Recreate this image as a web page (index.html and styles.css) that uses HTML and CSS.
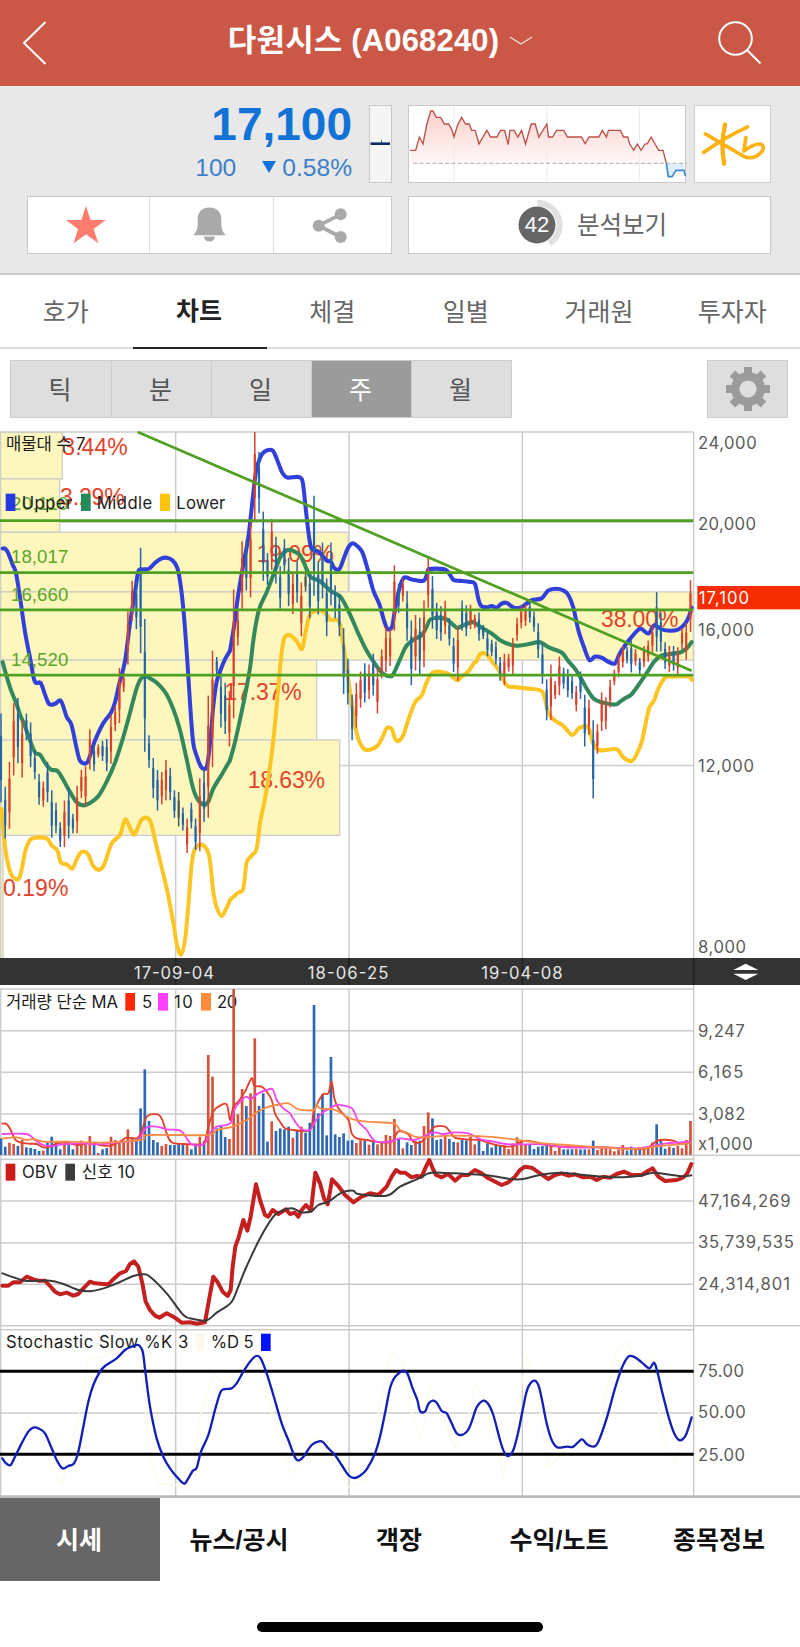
FILE: index.html
```html
<!DOCTYPE html>
<html lang="ko">
<head>
<meta charset="utf-8">
<title>다원시스 (A068240)</title>
<link rel="stylesheet" href="styles.css">
</head>
<body>
<header class="topbar">
  <svg class="back" viewBox="0 0 24 44"><path d="M22.5 1 1 22 22.5 43"/></svg>
  <h1 class="title">다원시스 (A068240)<svg class="chev" viewBox="0 0 24 10"><path d="M1 1 12 8 23 1"/></svg></h1>
  <svg class="search" viewBox="0 0 44 44"><circle cx="17.5" cy="17.5" r="16.3"/><path d="M29 29 42.500 42.500"/></svg>
</header>

<section class="quote">
  <div class="left">
    <div class="row">
      <div class="price">
        <div class="now">17,100</div>
        <div class="diff"><span>100</span><i class="down"></i><span>0.58%</span></div>
      </div>
      <div class="mini"><svg viewBox="0 0 23 78"><path d="M12.500 35v4" stroke="#2d6fc4"/><path d="M1.500 38.700h19.500" stroke="#0d2c66" stroke-width="2.600"/></svg></div>
    </div>
    <div class="buttons">
      <div class="btn"><svg width="40" height="38" viewBox="0 0 120 114"><path fill="#ff7d6e" d="M60 0 74 42 119 42 83 69 97 112 60 85 23 112 36 69 0 42 46 42Z"/></svg></div>
      <div class="btn bell"><svg width="33" height="35" viewBox="0 0 99 104"><path fill="#a9a9a9" d="M1 84Q12 74 14 56V36C14 14 28 1 49 1S85 14 85 36V56Q87 74 98 84ZM32 88H66Q63 103 49 103T32 88Z"/></svg></div>
      <div class="btn share"><svg width="35" height="35" viewBox="0 0 105 105"><g fill="#a9a9a9" stroke="none"><path d="M86 19 20 53 86 87" fill="none" stroke="#a9a9a9" stroke-width="11"/><circle cx="86" cy="19" r="18"/><circle cx="20" cy="53" r="18"/><circle cx="86" cy="87" r="18"/></g></svg></div>
    </div>
  </div>
  <div class="right">
    <div class="row">
      <div class="spark">
        <svg viewBox="27 318 829 228">
          <defs>
            <linearGradient id="warm" x1="0" y1="0" x2="0" y2="1"><stop offset="0" stop-color="#fbd0cc"/><stop offset="1" stop-color="#fff8f7"/></linearGradient>
          </defs>
          <path fill="url(#warm)" d="M30 451H47L58 411 69 432 80 375 92 333H99L109 352H122L133 372H146L155 388 162 411 173 375 185 352 197 372H208L215 391H226L237 432 261 391 272 411H291L302 391H314L325 434 330 391H343L354 411 365 391 377 432 394 372H406L417 411 441 372 446 411H458L470 391H492L503 411H545L556 431 568 411H597L608 391 620 411 626 391H662L672 411H684L690 432 702 451 713 432 724 451 736 432 743 431 754 411 777 451H790L800 490H30Z"/>
          <path stroke="#ececec" stroke-width="3" d="M162 318V546M441 318V546M719 318V546"/>
          <path fill="#dff0fc" d="M800 490 806 530H817L829 511H853V490Z"/>
          <path stroke="#aaa" stroke-width="3" stroke-dasharray="12 7" d="M40 490H862"/>
          <path fill="none" stroke="#bb5148" stroke-width="4" d="M30 451H47L58 411 69 432 80 375 92 333H99L109 352H122L133 372H146L155 388 162 411 173 375 185 352 197 372H208L215 391H226L237 432 261 391 272 411H291L302 391H314L325 434 330 391H343L354 411 365 391 377 432 394 372H406L417 411 441 372 446 411H458L470 391H492L503 411H545L556 431 568 411H597L608 391 620 411 626 391H662L672 411H684L690 432 702 451 713 432 724 451 736 432 743 431 754 411 777 451H790L800 490"/>
          <path fill="none" stroke="#3d86ca" stroke-width="5" d="M800 490 806 530H817L829 511H853L857 528"/>
        </svg>
      </div>
      <div class="brand">
        <svg viewBox="886 319 224 226"><g fill="none" stroke="#fcb215" stroke-width="11" stroke-linecap="round" stroke-linejoin="round"><path stroke-width="13" d="M976 374Q962 430 973 491"/><path d="M917 402 965 430 1034 470Q1052 477 1070 468C1094 454 1096 433 1078 432Q1060 432 1032 453L1038 413M1043 381Q975 413 912 457"/></g></svg>
      </div>
    </div>
    <div class="analysis">
      <span class="score"><svg viewBox="0 0 50 50"><path d="M22 3A22 22 0 0 1 34.500 43.500" fill="none" stroke="#e0e0e0" stroke-width="6"/><circle cx="22" cy="25" r="18.500" fill="#666"/></svg><b>42</b></span>
      <span class="view">분석보기</span>
    </div>
  </div>
</section>

<nav class="tabs">
  <a>호가</a><a class="on">차트</a><a>체결</a><a>일별</a><a>거래원</a><a>투자자</a>
</nav>

<div class="tools">
  <div class="periods"><a>틱</a><a>분</a><a>일</a><a class="on">주</a><a>월</a></div>
  <div class="gear">
    <svg viewBox="-22 -22 44 44"><g fill="#9b9b9b"><rect x="-4" y="-22" width="8" height="44"/><rect x="-4" y="-22" width="8" height="44" transform="rotate(45)"/><rect x="-4" y="-22" width="8" height="44" transform="rotate(90)"/><rect x="-4" y="-22" width="8" height="44" transform="rotate(135)"/><circle r="17"/></g><circle r="8.600" fill="#dedede"/></svg>
  </div>
</div>

<svg class="chart price-chart" viewBox="0 0 2400 1614">
  <g transform="scale(1 1.0332)">
    <path class="grid" d="M0 35H2081M0 297H2081M0 1003H2081M2 35V1562M527 35V1562M1047 35V1562M1567 35V1562M2081 35V1562"/>
    <g fill="#fdf7be" stroke="#cfcfc8" stroke-width="4">
      <rect x="2" y="36" width="185" height="135"/><rect x="2" y="171" width="177" height="155"/>
      <rect x="2" y="326" width="1043" height="173"/><rect x="2" y="499" width="2078" height="198"/>
      <rect x="2" y="697" width="948" height="232"/><rect x="2" y="929" width="1017" height="277"/><rect x="2" y="1206" width="7" height="356"/>
    </g>
  </g>
  <g class="pct">
    <text x="187" y="106" textLength="196">3.44%</text><text x="180" y="256" textLength="194">3.29%</text>
    <text x="770" y="427" textLength="232">19.09%</text><text x="673" y="839" textLength="232">17.37%</text>
    <text x="743" y="1103" textLength="232">18.63%</text><text x="1803" y="620" textLength="232">38.00%</text>
    <text x="9" y="1427" textLength="196">0.19%</text>
  </g>
  <g transform="scale(1 1.0332)">
    <g class="lower smooth">
      <polyline points="5,1130 10,1190 20,1270 35,1322 55,1333 65,1305 75,1255 88,1222 105,1213 140,1215 155,1235 172,1250 183,1285 200,1290 217,1303 228,1280 240,1258 252,1253 265,1262 280,1295 298,1306 313,1290 335,1230 360,1205 375,1160 388,1180 402,1204 415,1180 425,1160 440,1155 453,1170 470,1240 500,1360 520,1460 530,1520 543,1552 555,1510 565,1410 575,1290 585,1245 605,1233 622,1250 630,1280 640,1370 650,1415 665,1440 678,1420 690,1395"/>
      <polyline transform="translate(690 0)" points="0,1393 25,1372 40,1360 50,1285 65,1265 80,1245 90,1170 105,1100 118,1020 130,930 140,830 150,720 157,660 165,630 180,625 200,642 216,665 226,620 240,565 270,553 290,565 300,580 325,582 335,620 350,720 365,820 378,900 390,938 408,958 440,948 458,920 470,895 485,897 495,925 505,932 520,915 535,870 555,820 575,800 590,762 610,733 650,735 680,755 690,750"/>
      <polyline transform="translate(1380 0)" points="0,748 25,730 40,708 50,700 60,680 80,680 95,700 115,725 140,770 160,775 205,780 240,785 252,800 265,850 285,873 310,888 335,914 350,903 360,893 385,893 400,940 420,959 470,956 490,980 515,990 530,970 545,935 555,890 568,835 582,815 595,780 615,748 635,745 685,745 695,755"/>
    </g>
    <g class="upper smooth">
      <polyline points="8,373 16,374 24,385 38,420 48,445 60,515 75,615 90,690 104,758 122,764 136,800 148,825 165,824 183,816 200,862 214,884 228,945 238,985 248,996 262,994 275,960 286,928 310,880 333,850 345,820 358,765 375,700 390,590 405,500 415,440 428,434 447,432 465,415 485,402 500,400 518,408 532,430 542,480 552,570 562,700 572,850 580,940 590,975 602,1005 614,1013 622,1000 632,920 640,830 650,760 662,725 675,695 690,670"/>
      <polyline transform="translate(690 0)" points="0,670 12,600 25,505 40,420 55,340 68,230 78,150 90,110 103,92 125,87 135,100 147,130 158,155 172,167 200,165 212,168 219,185 228,265 238,345 246,375 265,382 290,408 302,411 313,430 328,433 342,400 355,370 368,358 382,366 397,384 412,430 430,495 448,535 463,585 473,607 486,600 495,550 508,490 522,458 545,463 580,467 592,445 598,433 640,433 655,442 670,464 690,467"/>
      <polyline transform="translate(1380 0)" points="0,467 30,470 45,476 54,515 62,538 80,544 95,540 110,545 125,533 140,531 160,544 180,545 200,533 215,523 245,518 265,495 290,490 310,495 325,508 340,545 355,610 372,660 388,697 405,687 425,690 445,702 465,707 478,680 495,655 515,630 540,606 565,620 583,596 605,608 630,612 655,608 675,592 687,570 695,545"/>
    </g>
    <g class="middle smooth">
      <polyline points="8,703 20,745 35,790 48,820 60,855 75,890 90,930 105,965 120,972 135,995 152,1015 172,1019 190,1045 210,1080 230,1110 250,1119 270,1112 295,1092 320,1050 345,995 370,920 390,850 408,785 420,755 435,744 460,756 480,772 500,797 520,840 540,900 560,985 578,1065 592,1100 612,1117 625,1108 640,1070 665,1030 690,988"/>
      <polyline transform="translate(690 0)" points="0,988 15,935 30,870 45,800 60,720 70,640 80,580 90,542 110,500 130,450 150,400 165,382 180,377 195,383 210,392 222,415 235,445 245,458 270,468 300,495 330,512 345,535 365,575 385,620 410,670 440,715 460,737 480,744 490,738 510,695 530,655 555,635 575,625 590,600 600,580 620,574 640,576 655,582 670,595 682,604 690,601"/>
      <polyline transform="translate(1380 0)" points="0,601 20,592 40,587 60,600 95,620 125,642 165,655 200,652 235,645 250,650 270,662 305,675 325,700 345,722 360,745 380,780 400,808 420,818 465,826 480,818 495,808 515,796 535,770 560,735 580,705 600,686 625,680 660,675 680,663 695,645"/>
    </g>
    <g id="candles"></g>
    <path class="levels" d="M0 292H2080M0 443H2080M0 551H2080M0 741H2080M413 35 2075 728"/>
  </g>
  <g class="lvl-text">
    <text x="33" y="271" textLength="172">20,110</text><text x="33" y="429" textLength="172">18,017</text>
    <text x="33" y="542" textLength="172">16,660</text><text x="33" y="738" textLength="172">14,520</text>
  </g>
  <g class="legend">
    <text x="18" y="90" textLength="238">매물대 수 7</text>
    <rect x="17" y="221" width="29" height="52" fill="#2638e0"/><text x="65" y="266" textLength="152">Upper</text>
    <rect x="243" y="221" width="29" height="52" fill="#258a5c"/><text x="290" y="266" textLength="167">Middle</text>
    <rect x="480" y="221" width="30" height="52" fill="#fdc40c"/><text x="529" y="266" textLength="147">Lower</text>
  </g>
  <g class="axis">
    <text x="2094" y="88" textLength="176">24,000</text><text x="2094" y="329" textLength="174">20,000</text>
    <text x="2094" y="647" textLength="168">16,000</text><text x="2094" y="1055" textLength="168">12,000</text><text x="2094" y="1598" textLength="144">8,000</text>
    <rect x="2092" y="498" width="308" height="70" fill="#f62d00"/><text class="tag" x="2096" y="552" textLength="151">17,100</text>
  </g>
</svg>

<svg class="chart dates" viewBox="0 24 2400 81">
  <path stroke="#222" stroke-width="5" d="M527 24V105M1047 24V105M1567 24V105M2081 24V105"/>
  <g class="date"><text x="402" y="86" textLength="240">17-09-04</text><text x="923" y="86" textLength="242">18-06-25</text><text x="1444" y="86" textLength="244">19-04-08</text></g>
  <path fill="#fff" d="M2200 60 2237 41 2275 60ZM2200 71 2237 90 2275 71Z"/>
</svg>

<svg class="chart volume" viewBox="0 105 2400 513">
  <path class="grid" d="M0 117H2081M0 242H2081M0 367H2081M0 492H2081M0 616H2400M2 117V616M527 117V616M1047 117V616M1567 117V616M2081 105V618"/>
  <g class="legend">
    <text x="18" y="173" textLength="336">거래량 단순 MA</text>
    <rect x="376" y="129" width="29" height="53" fill="#ff2800"/><text x="426" y="173">5</text>
    <rect x="474" y="129" width="30" height="53" fill="#ff40ff"/><text x="522" y="173" textLength="56">10</text>
    <rect x="603" y="129" width="30" height="53" fill="#ff8c3c"/><text x="651" y="173" textLength="61">20</text>
  </g>
  <g id="bars"></g>
  <g class="ma smooth">
    <polyline stroke="#e2402a" points="7,521 20,522 32,540 45,568 60,577 85,581 110,582 130,592 150,590 170,580 200,578 235,585 270,578 300,585 330,587 360,575 380,563 410,565 425,545 435,510 447,495 475,494 487,510 500,550 515,577 550,582 590,583 612,580 625,530 640,485 655,470 680,463 690,510 700,470 715,455 735,425 755,385 763,407 785,410 800,425 815,450 825,490 840,515 855,535 880,540 930,540 940,490 955,455 970,432 985,430 995,395 1003,445 1015,475 1045,510 1055,550 1070,565 1100,570 1140,577 1175,575 1190,550 1200,543 1225,553 1240,575 1260,578 1275,565 1290,545 1305,530 1335,530 1350,545 1365,563 1400,568 1440,570 1470,580 1530,590 1570,573 1600,575 1630,583 1680,590 1760,592 1820,592 1900,597 1940,595 1960,580 1980,570 2020,572 2040,582 2070,575"/>
    <polyline stroke="#f545ee" points="7,552 80,552 105,570 130,585 160,588 190,583 250,580 300,583 370,575 410,572 425,555 440,532 470,530 500,538 535,540 550,550 575,583 612,582 630,550 650,530 690,520 705,475 725,450 740,440 752,447 775,430 800,420 818,418 830,450 850,475 870,490 885,515 905,537 930,540 945,515 965,490 990,475 1010,465 1045,470 1060,480 1075,515 1100,540 1125,573 1170,575 1200,565 1240,570 1270,560 1290,550 1310,548 1330,552 1365,547 1405,550 1440,567 1480,575 1530,583 1630,583 1700,592 1800,592 1900,595 1960,588 2000,580 2070,575"/>
    <polyline stroke="#f78c46" points="7,565 50,562 80,570 100,567 130,575 200,575 300,578 370,575 430,568 445,555 620,555 650,540 690,532 710,525 740,510 770,487 800,472 830,465 865,460 895,478 940,480 950,462 960,475 1000,478 1025,490 1050,505 1100,515 1180,520 1200,540 1225,550 1245,560 1270,562 1360,557 1460,560 1540,568 1630,580 1700,585 1800,592 1900,597 1980,588 2070,580"/>
  </g>
  <g class="axis"><text x="2094" y="260" textLength="140">9,247</text><text x="2094" y="384" textLength="136">6,165</text><text x="2094" y="509" textLength="142">3,082</text><text x="2094" y="599" textLength="164">x1,000</text></g>
</svg>

<svg class="chart osc" viewBox="0 18 2400 1026">
  <path class="grid" d="M0 28H2081M0 153H2081M0 278H2081M0 403H2081M0 527H2400M0 539H2081M0 789H2081M2 18V1040M527 28V1040M1047 28V1040M1567 28V1040M2081 18V1040"/>
  <polyline class="obv" points="7,407 25,407 40,397 60,397 80,380 100,388 115,392 135,392 150,408 165,425 180,433 200,428 220,437 235,432 250,415 270,395 285,400 310,402 325,403 345,383 360,370 378,363 390,342 402,334 415,350 427,400 437,455 450,480 465,497 478,503 500,490 520,500 545,518 570,517 590,521 615,517 627,450 640,380 652,395 668,425 683,438 692,420 698,350 706,290 716,262 730,210 742,242 752,200 768,103 780,150 795,195 805,200 818,180 835,192 858,178 870,192 885,188 895,200 905,180 918,165 933,182 940,120 946,68 960,100 972,145 983,163 990,125 996,88 1015,108 1035,135 1060,157 1085,140 1110,130 1135,135 1160,110 1175,80 1188,60 1200,68 1215,68 1235,82 1250,78 1265,80 1278,50 1288,30 1298,55 1308,75 1325,82 1345,72 1365,92 1385,75 1405,75 1425,60 1445,70 1465,85 1505,105 1525,97 1545,80 1560,60 1575,50 1595,53 1620,70 1645,87 1665,75 1685,70 1705,77 1725,73 1750,82 1770,80 1790,90 1810,80 1830,83 1850,72 1872,65 1895,75 1925,75 1945,62 1958,55 1975,80 1995,93 2030,90 2050,82 2062,70 2074,42"/>
  <g class="signal smooth">
    <polyline points="7,370 50,385 80,393 150,392 190,402 235,420 275,423 320,412 360,396 400,378 430,373 450,380 500,430 550,495 580,507 620,511 650,488 693,458 715,410 735,360 780,265 820,200 840,185 875,175 905,187 935,183 955,165 985,155 1025,128 1060,122 1075,132 1160,137 1200,110 1250,88 1275,75 1295,68 1360,70 1470,77 1530,87 1570,87 1620,75 1680,68 1760,76 1850,82 1920,77 1960,68 2000,73 2050,79 2074,76"/>
  </g>
  <polyline class="k" points="7,960 30,920 80,800 115,840 150,940 185,1003 210,920 240,780 265,630 310,620 400,570 425,650 450,930 475,1000 520,1005 550,1010 580,960 600,800 640,670 670,700 760,610 800,700 820,820 870,970 900,950 945,855 1000,930 1045,1012 1100,990 1135,800 1175,600 1210,640 1235,790 1263,865 1290,705 1325,790 1365,895 1405,800 1425,700 1470,780 1510,980 1545,820 1580,615 1610,700 1645,950 1670,930 1730,860 1780,880 1820,720 1850,600 1880,575 1920,650 1960,610 1985,860 2025,935 2075,790"/>
  <path stroke="#000" stroke-width="9" d="M0 664H2081M0 913H2081"/>
  <g class="legend">
    <rect x="17" y="41" width="29" height="51" fill="#cc1c1a"/><text x="66" y="83" textLength="106">OBV</text>
    <rect x="196" y="41" width="29" height="51" fill="#3c3c3c"/><text x="245" y="83" textLength="160">신호 10</text>
    <text x="18" y="593" textLength="547">Stochastic Slow %K 3</text>
    <rect x="587" y="552" width="25" height="50" fill="#fdf9ea"/><text x="632" y="593" textLength="129">%D 5</text>
    <rect x="783" y="551" width="29" height="52" fill="#0011ff"/>
  </g>
  <g class="d smooth">
    <polyline points="7,925 18,940 32,945 45,920 65,880 85,845 100,833 115,835 135,850 155,895 170,930 187,955 205,948 222,940 235,905 250,830 265,755 280,705 300,665 315,648 350,625 375,600 395,590 415,585 428,605 436,665 450,770 470,865 490,920 510,955 530,980 552,1001 565,985 578,963 590,953 603,905 625,855 645,780 660,730 670,718 695,715 710,700 730,665 750,635 768,618 782,625 800,670 820,735 845,820 865,870 885,922 897,931 912,918 935,885 957,874 970,877 985,895 1005,915 1025,945 1045,975 1062,984 1080,977 1100,958 1125,910 1140,860 1155,790 1170,715 1182,685 1200,667 1210,662 1222,670 1238,715 1252,750 1260,783 1275,785 1285,762 1298,752 1310,758 1325,783 1340,790 1355,820 1370,850 1385,855 1403,842 1415,815 1430,772 1450,752 1465,762 1480,795 1500,870 1512,905 1525,918 1540,900 1555,845 1570,770 1583,715 1602,692 1615,705 1625,745 1640,820 1655,870 1672,892 1700,890 1720,890 1745,868 1760,882 1780,890 1795,875 1820,805 1845,715 1865,655 1885,620 1905,622 1925,637 1948,655 1962,638 1972,665 1990,740 2010,815 2025,855 2040,871 2055,860 2065,835 2075,802"/>
  </g>
  <path stroke="#bcbcbc" stroke-width="8" d="M0 1040H2400"/>
  <g class="axis"><text x="2094" y="170" textLength="278">47,164,269</text><text x="2094" y="294" textLength="288">35,739,535</text><text x="2094" y="419" textLength="276">24,314,801</text>
    <text x="2094" y="680" textLength="138">75.00</text><text x="2094" y="805" textLength="143">50.00</text><text x="2094" y="932" textLength="141">25.00</text></g>
</svg>

<nav class="bottom">
  <a class="on">시세</a><a>뉴스/공시</a><a>객장</a><a>수익/노트</a><a>종목정보</a>
</nav>
<div class="home"></div>
<script src="app.js"></script>
</body>
</html>
```
FILE: styles.css
```css
* { box-sizing: border-box; }
body {
  margin: 0;
  width: 800px;
  height: 1647px;
  overflow: hidden;
  background: #fff;
  font-family: "Liberation Sans", "Noto Sans CJK KR", sans-serif;
  color: #666;
  display: flex;
  flex-direction: column;
}
svg { display: block; }

.topbar {
  height: 86px;
  flex: none;
  background: #cb5746;
  display: flex;
  align-items: center;
  justify-content: space-between;
  padding: 0 38px 0 23px;
}
.topbar svg { fill: none; stroke: #fff; stroke-width: 2; }
.back { width: 24px; height: 44px; }
.title {
  margin: 0 0 5px -4px;
  font-size: 31px;
  letter-spacing: .15px;
  line-height: 40px;
  font-weight: 700;
  color: #fff;
  display: flex;
  align-items: center;
  gap: 10px;
  white-space: nowrap;
}
.title .chev { width: 24px; height: 10px; stroke-width: 1.4; opacity: .8; }
.search { width: 44px; height: 44px; }

.quote {
  height: 189px;
  flex: none;
  background: #e8e8e8;
  border-bottom: 2px solid #ccc;
  padding: 19px 29px 0 27px;
  display: flex;
  justify-content: space-between;
}
.left { width: 365px; }
.right { width: 363px; }
.row { display: flex; justify-content: space-between; height: 78px; margin-bottom: 13px; }
.price { width: 325px; text-align: right; color: #1273d6; }
.now { font-size: 46px; font-weight: 700; line-height: 39px; }
.diff { display: flex; justify-content: flex-end; align-items: center; font-size: 24.600px; line-height: 28px; margin-top: 10px; color: #3b7fca; }
.down { border: 7px solid transparent; border-top: 12px solid #1273d6; border-bottom: 0; margin: -3px 6px 0 26px; }
.mini { width: 23px; background: #f5f5f5; border: 1px solid #c8c8c8; }
.mini svg { width: 23px; height: 78px; margin: -1px; }
.buttons { height: 58px; display: grid; grid-template-columns: 121px 124px 1fr; background: #fff; border: 1px solid #c8c8c8; }
.btn { display: flex; align-items: center; justify-content: center; border-left: 1px solid #ddd; }
.btn:first-child { border: 0; padding-right: 5px; }
.bell { padding: 0 5px 2px 0; }
.share { padding-right: 6px; }
.spark { width: 278px; background: #fff; border: 1px solid #c8c8c8; }
.spark svg { width: 276px; height: 76px; overflow: visible; }
.brand { width: 77px; background: #fff; border: 1px solid #d0d0d0; }
.brand svg { width: 75px; height: 76px; }
.analysis {
  height: 58px;
  background: #fff;
  border: 1px solid #c8c8c8;
  display: flex;
  align-items: center;
  padding-left: 106px;
  gap: 12px;
  font-size: 24.500px;
}
.view { padding-bottom: 3px; }
.score { display: grid; place-items: center start; width: 50px; }
.score svg, .score b { grid-area: 1 / 1; }
.score svg { width: 50px; height: 50px; }
.score b { width: 44px; text-align: center; color: #fff; font-weight: 400; font-size: 22px; }

.tabs { height: 74px; flex: none; display: grid; grid-template-columns: repeat(6, 1fr); border-bottom: 2px solid #ddd; }
.tabs a { display: flex; align-items: center; justify-content: center; font-size: 25px; padding: 0 2px 4px 0; margin-bottom: -2px; }
.tabs .on { color: #222; font-weight: 700; border-bottom: 2px solid #222; }

.tools { height: 71px; flex: none; padding: 11px 12px 0 10px; display: flex; justify-content: space-between; }
.periods { width: 502px; height: 58px; display: grid; grid-template-columns: repeat(5, 1fr); background: #dedede; border: 1px solid #ccc; }
.periods a { display: flex; align-items: center; justify-content: center; font-size: 25px; padding: 0 2px 2px 0; border-left: 1px solid #ccc; color: #555; }
.periods a:first-child { border: 0; }
.periods .on { background: #9b9b9b; color: #fff; }
.gear { width: 81px; height: 58px; background: #dedede; border: 1px solid #ccc; display: flex; align-items: center; justify-content: center; }
.gear svg { width: 44px; height: 44px; }

.chart { width: 800px; flex: none; }
.price-chart { height: 538px; }
.dates { height: 27px; background: #333; }
.volume { height: 171px; }
.osc { height: 342px; }
.chart text { font-family: Inter, "Noto Sans CJK KR", sans-serif; font-size: 50px; }
.grid { stroke: #ccc; stroke-width: 4.500; fill: none; }
.legend text { fill: #1c1c1c; }
.axis text { fill: #5a5a5a; }
.axis .tag { fill: #fff; }
.date text { fill: #e6e6e6; }
.chart .pct text { font-family: "Liberation Sans", sans-serif; font-size: 69px; fill: #e2432b; }
.chart .lvl-text text { font-family: "Liberation Sans", sans-serif; font-size: 56px; fill: #5ba626; }
polyline, .smooth path { fill: none; stroke-linejoin: round; stroke-linecap: round; }
.upper { stroke: #3140d8; stroke-width: 12; }
.middle { stroke: #33895c; stroke-width: 12; }
.lower { stroke: #fcc526; stroke-width: 12; }
.levels { fill: none; stroke: #50a021; stroke-width: 8; }
.ma { stroke-width: 5.500; }
.obv { stroke: #c4201f; stroke-width: 12; }
.signal { stroke: #3a3a3a; stroke-width: 6; }
.k { stroke: #fdfbf0; stroke-width: 5; }
.d { stroke: #1220b4; stroke-width: 7; }

.bottom { height: 84px; flex: none; display: grid; grid-template-columns: repeat(5, 1fr); }
.bottom a { display: flex; align-items: center; justify-content: center; font-size: 25px; font-weight: 700; color: #111; padding: 0 2px 5px 0; }
.bottom .on { background: #666; color: #fff; margin-bottom: 1px; padding-bottom: 4px; }
.home { width: 286px; height: 10px; flex: none; border-radius: 5px; background: #000; margin: 40px auto 0; }
```
FILE: app.js
```js
// Weekly candles: direction (b down, r up, k flat), high, low, volume top
const weeks = `b852,1110,565 b1065,1215,590 r993,1187,578 r822,1032,582 b807,997,588 r870,1038,570 b852,930,592 b878,1008,594
b960,1043,597 b1028,1117,603 r1050,1123,602 b993,1110,577 b1075,1213,560 b1111,1200,573 b1168,1240,598 r1105,1240,580
b1068,1215,580 b1143,1200,598 r1062,1200,583 r1016,1098,572 r1005,1122,583 r898,1015,558 b940,1020,575 r942,980,609
b932,990,598 b926,1020,594 r856,998,560 r830,903,570 r720,880,573 r735,790,573 r556,710,538 r467,583,562
b470,607,568 b371,677,475 b578,963,358 b915,1010,513 b981,1098,570 b1016,1134,577 r1022,1116,588 r987,1104,582
b1010,1104,585 b1075,1155,585 k1080,1180,580 b1125,1192,584 r1157,1257,583 b1111,1186,598 b1157,1248,588 r1040,1252,560
b1015,1167,573 r800,1155,315 r670,1008,380 b688,740,535 b735,893,525 b763,912,561 r787,948,567 r492,866,117
r556,655,493 r352,548,417 b348,495,468 r290,515,430 r35,290,265 b93,271,468 b266,467,430 b386,478,575
r287,435,514 b339,475,543 b425,548,535 b346,447,538 b400,540,530 r446,563,563 b410,530,540 r472,628,530
k440,498,548 b440,576,518 b220,510,165 b410,565,490 b356,518,432 b460,628,556 b356,538,321 b480,576,553
b505,628,561 b604,796,550 b693,826,572 b798,930,570 r763,893,579 r730,835,571 b706,820,572 r710,810,584
b679,800,574 r720,852,583 r666,750,575 r600,732,555 r606,714,558 r422,612,507 b475,560,565 r460,527,595
b497,641,577 b582,770,585 r566,727,573 b574,738,572 r524,718,528 r398,545,487 b453,606,505 b531,636,570
b541,641,567 r525,622,555 b575,655,567 b632,732,576 r600,757,577 b524,612,570 b538,628,571 r536,607,560
r565,605,583 b559,641,572 b595,636,603 b617,686,580 b638,686,593 b643,710,585 b688,757,586 r679,770,586
r679,731,597 r633,740,580 r574,641,562 r540,605,570 r536,598,585 b527,588,583 b556,615,597 b590,691,590
b652,766,588 b753,872,588 r710,872,588 r758,810,603 r687,799,590 b719,780,598 b723,805,598 b742,810,598
r772,846,597 b730,810,598 b798,948,598 r812,914,598 b872,1099,572 r883,969,600 r791,903,595 r805,898,595
r754,835,598 r725,770,604 r680,747,598 r656,719,585 b659,706,602 b640,733,590 r665,713,600 b691,738,597
r656,718,597 r640,702,589 r595,676,578 b500,672,523 b560,672,571 b645,723,596 r656,732,590 b656,728,594
r660,739,587 r603,665,595 r590,696,570 r465,615,513`.split(/\s+/);

const candleColor = { b: "#2464a8", r: "#d8412a", k: "#4b5a55" };
const barColor = { b: "#2d68b4", r: "#d2543c", k: "#2d68b4" };
let candles = "";
let bars = "";
weeks.forEach((week, i) => {
  const dir = week[0];
  const [high, low, vol] = week.slice(1).split(",").map(Number);
  const x = 3 + 12.69 * i;
  const quarter = (low - high) * 0.25;
  candles += `<path stroke="${candleColor[dir]}" stroke-width="4.500" d="M${x} ${high}V${low}"/>` +
    `<path stroke="${candleColor[dir]}" stroke-width="6.500" d="M${x} ${high + quarter}V${low - quarter}"/>`;
  bars += `<path stroke="${barColor[dir]}" stroke-width="8" d="M${x} ${vol}V615"/>`;
});
document.getElementById("candles").innerHTML = candles;
document.getElementById("bars").innerHTML = bars;

// Turn the indicator polylines into Catmull-Rom curves
document.querySelectorAll(".smooth polyline").forEach((line) => {
  const p = line.getAttribute("points").split(" ").map((s) => s.split(",").map(Number));
  let d = `M${p[0]}`;
  for (let i = 0; i < p.length - 1; i++) {
    const a = p[i - 1] || p[i], b = p[i], c = p[i + 1], e = p[i + 2] || c;
    d += `C${b[0] + (c[0] - a[0]) / 6},${b[1] + (c[1] - a[1]) / 6} ${c[0] - (e[0] - b[0]) / 6},${c[1] - (e[1] - b[1]) / 6} ${c}`;
  }
  const path = document.createElementNS("http://www.w3.org/2000/svg", "path");
  path.setAttribute("d", d);
  for (const name of ["stroke", "transform"]) {
    if (line.hasAttribute(name)) path.setAttribute(name, line.getAttribute(name));
  }
  line.replaceWith(path);
});
```
